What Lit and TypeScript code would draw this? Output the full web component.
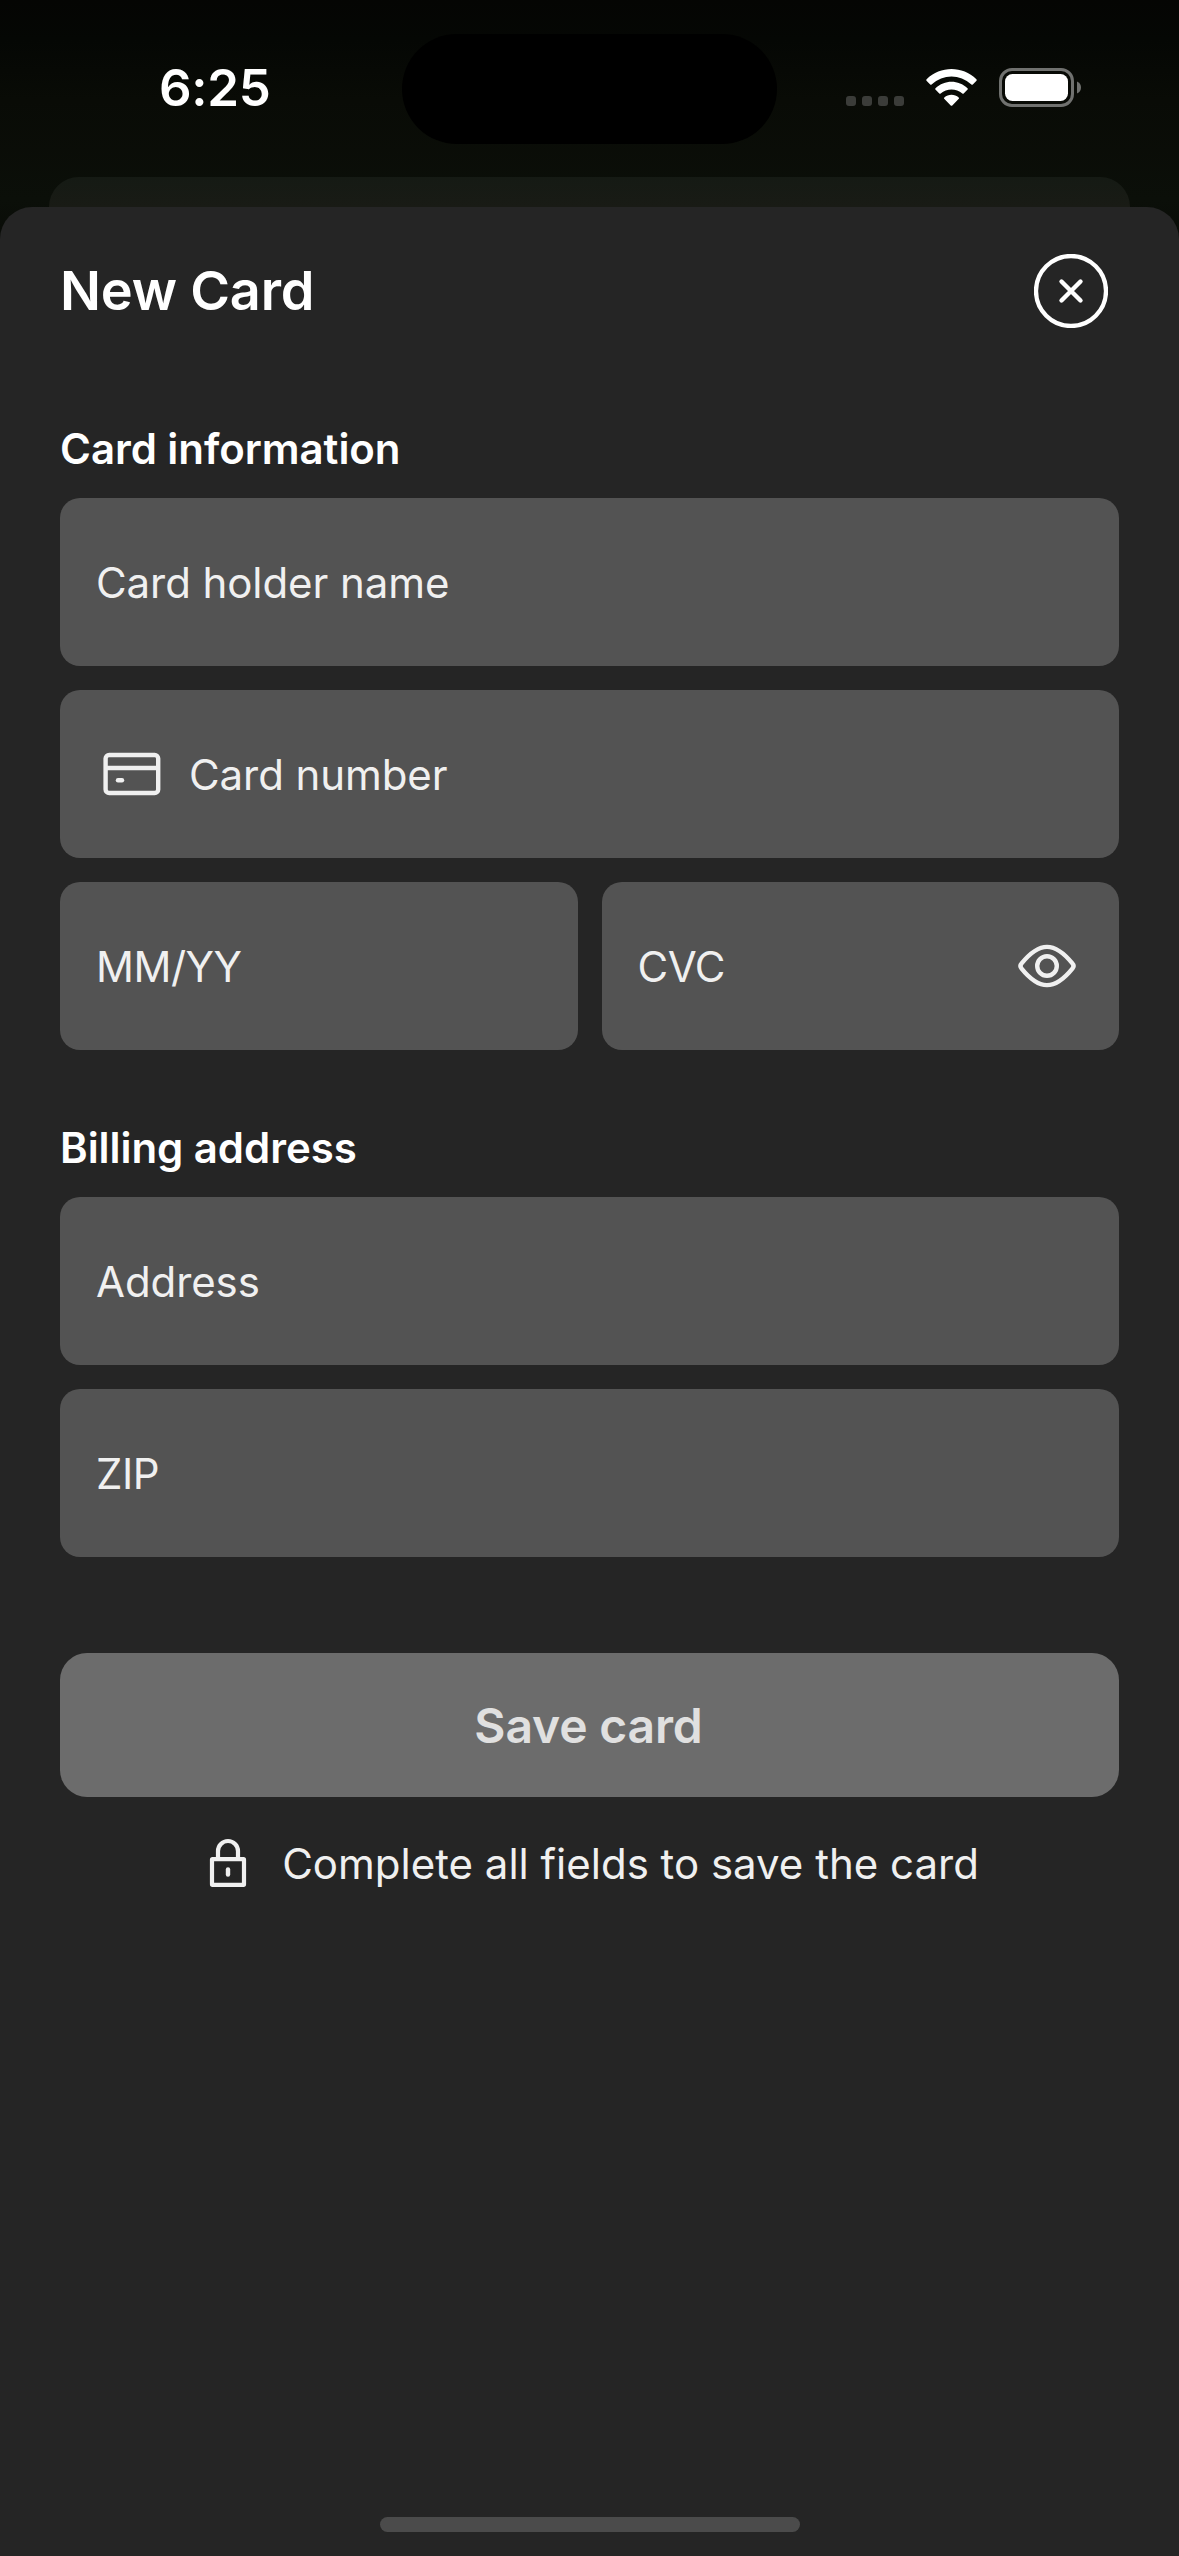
import { LitElement, html, css, svg } from "lit";
import { customElement, property } from "lit/decorators.js";

const icons = {
  card: svg`<svg width="72" height="60" viewBox="0 0 72 60" fill="none" stroke="#f0f0f0" stroke-width="4.4">
    <rect x="9.6" y="11" width="52.6" height="38" rx="3.6"/>
    <path d="M9.6 24H62.2"/><path d="M22 36.2H26" stroke-linecap="round"/></svg>`,
  eye: svg`<svg width="72" height="60" viewBox="0 0 72 60" fill="none" stroke="#f0f0f0" stroke-width="4.4">
    <path d="M10.400 32.300C9.200 30.900 9.200 29.100 10.400 27.700C17 19.500 25.500 10.900 36 10.900C46.500 10.900 55 19.500 61.600 27.700C62.800 29.100 62.800 30.900 61.600 32.300C55 40.500 46.500 49.100 36 49.100C25.500 49.100 17 40.500 10.400 32.300Z"/>
    <circle cx="36" cy="30" r="9.8"/></svg>`,
};

@customElement("card-field")
export class CardField extends LitElement {
  @property() label = "";
  @property() lead = "";
  @property() trail = "";

  static styles = css`
    :host { display: block; }
    .field {
      box-sizing: border-box; height: 168px; padding: 0 36px;
      display: flex; align-items: center;
      background: #535353; border-radius: 20px;
      font: 400 42px/52px Inter, sans-serif; letter-spacing: -0.08px; color: #f0f0f0;
    }
    .label { flex: 1; padding-top: 2px; }
    .caps { letter-spacing: -0.5px; }
    .icon { display: flex; }
    .lead { width: 93px; }
  `;

  render() {
    const caps = this.label === this.label.toUpperCase();
    return html`<div class="field">
      ${this.lead ? html`<span class="icon lead">${icons.card}</span>` : ""}
      <span class=${caps ? "label caps" : "label"}>${this.label}</span>
      ${this.trail ? html`<span class="icon">${icons.eye}</span>` : ""}
    </div>`;
  }
}

@customElement("app-root")
export class AppRoot extends LitElement {
  static styles = css`
    :host { display: block; }
    .screen {
      position: relative; box-sizing: border-box;
      width: 1179px; height: 2556px; overflow: hidden;
      display: flex; flex-direction: column;
      background: linear-gradient(#050503 0, #050704 40px, #090b06 100px, #0b0f09 200px, #080a06 260px);
      font-family: Inter, sans-serif; color: #fff;
    }
    .status { height: 177px; display: flex; flex: none; }
    .time {
      width: 402px; box-sizing: border-box; padding: 57px 0 0 159px;
      font: 600 51px/62px Inter, sans-serif; letter-spacing: -0.3px;
    }
    .island { width: 375px; height: 110px; margin-top: 34px; border-radius: 55px; background: #000; }
    .signals { display: block; margin: 50px 0 0 43px; }
    .behind {
      flex: none; height: 30px; margin: 0 49px; border-radius: 30px 30px 0 0;
      background: linear-gradient(#151a14, #191b15);
    }
    .sheet {
      flex: 1; box-sizing: border-box; padding: 47px 60px 0;
      background: #252525; border-radius: 32px 32px 0 0;
    }
    .head { display: flex; align-items: center; justify-content: space-between; padding-right: 11px; height: 74px; }
    .title { margin: 0; font-size: 54px; line-height: 66px; font-weight: 600; letter-spacing: -0.2px; }
    .close { display: block; }
    .section { margin: 0; font-size: 42px; line-height: 54px; font-weight: 600; letter-spacing: -0.05px; }
    .info { margin-top: 94px; }
    .billing { margin-top: 71px; }
    .fields { display: grid; gap: 24px; margin-top: 22px; }
    .pair { display: grid; grid-template-columns: 1fr 1fr; gap: 24px; }
    .save {
      display: block; width: 100%; height: 144px; margin: 96px 0 0; padding: 2px 2px 0 0;
      border: 0; border-radius: 27px; background: #6c6c6c; color: #e0e0e0;
      font: 600 48px/60px Inter, sans-serif; letter-spacing: -0.15px;
    }
    .note {
      display: flex; justify-content: center; align-items: center; gap: 24px;
      margin-top: 37px; padding-right: 2px; height: 60px; white-space: nowrap;
      font-size: 42px; line-height: 52px; font-weight: 400; color: #f0f0f0;
    }
    .note svg { display: block; }
    .home {
      position: absolute; left: 380px; top: 2517px; width: 420px; height: 15px;
      border-radius: 8px; background: #4b4b4b;
    }
  `;

  render() {
    return html`
      <div class="screen">
        <div class="status">
          <div class="time">6:25</div>
          <div class="island"></div>
          <svg class="signals" width="290" height="80" viewBox="0 0 290 80">
            <g fill="#3b3c39">
              <rect x="26" y="46" width="10" height="10" rx="3"/><rect x="42" y="46" width="10" height="10" rx="3"/>
              <rect x="58" y="46" width="10" height="10" rx="3"/><rect x="74" y="46" width="10" height="10" rx="3"/>
            </g>
            <g fill="#fff" stroke="none">
              <path d="M106.6 29.2C120.500 15.700 142.500 15.700 156.400 29.200C156.900 29.700 156.900 30.200 156.500 30.700L152.800 34.400C152.400 34.800 151.800 34.800 151.400 34.400C139.700 23.700 123.300 23.700 111.600 34.400C111.200 34.800 110.600 34.800 110.200 34.400L106.500 30.700C106.100 30.200 106.100 29.700 106.600 29.200Z"/>
              <path d="M115.500 38.300C124.400 29.400 138.600 29.400 147.500 38.300C148.000 38.800 148.000 39.200 147.600 39.600L143.700 43.500C143.300 43.900 142.700 43.900 142.300 43.500C136.300 38.000 126.700 38.000 120.700 43.500C120.300 43.900 119.700 43.900 119.300 43.500L115.400 39.600C115.000 39.200 115.000 38.800 115.500 38.300Z"/>
              <path d="M124.300 47.400C128.300 43.700 134.700 43.700 138.700 47.400C139.200 47.900 139.200 48.400 138.800 48.800L132.300 55.400C131.800 55.900 131.200 55.900 130.700 55.400L124.200 48.800C123.800 48.400 123.800 47.900 124.300 47.400Z"/>
            </g>
            <rect x="180.500" y="19.500" width="72" height="36" rx="11.500" fill="none" stroke="#70716f" stroke-width="3"/>
            <rect x="185" y="24" width="63" height="27" rx="7.500" fill="#fff"/>
            <path d="M257 31.500C259.500 32.500 261 34.700 261 37.500C261 40.300 259.500 42.500 257 43.500Z" fill="#70716f"/>
          </svg>
        </div>
        <div class="behind"></div>
        <main class="sheet">
          <header class="head">
            <h1 class="title">New Card</h1>
            <svg class="close" width="74" height="74" viewBox="0 0 74 74" fill="none" stroke="#fff">
              <circle cx="37" cy="37" r="35" stroke-width="4.300"/>
              <path d="M27.500 27.500L46.500 46.500M46.500 27.500L27.500 46.500" stroke-width="4.400" stroke-linecap="round"/>
            </svg>
          </header>
          <h2 class="section info">Card information</h2>
          <div class="fields">
            <card-field label="Card holder name"></card-field>
            <card-field label="Card number" lead="card"></card-field>
            <div class="pair">
              <card-field label="MM/YY"></card-field>
              <card-field label="CVC" trail="eye"></card-field>
            </div>
          </div>
          <h2 class="section billing">Billing address</h2>
          <div class="fields">
            <card-field label="Address"></card-field>
            <card-field label="ZIP"></card-field>
          </div>
          <button class="save">Save card</button>
          <div class="note">
            <svg width="60" height="60" viewBox="0 0 60 60" fill="none" stroke="#f0f0f0" stroke-width="4.200">
              <rect x="14" y="25.200" width="32" height="25.600" rx="0.500"/>
              <path d="M20 25V17C20 11.500 24.500 7 30 7C35.500 7 40 11.500 40 17V25"/>
              <path d="M30 35.500V40.500" stroke-width="4.400" stroke-linecap="round"/>
            </svg>
            <span>Complete all fields to save the card</span>
          </div>
        </main>
        <div class="home"></div>
      </div>
    `;
  }
}
